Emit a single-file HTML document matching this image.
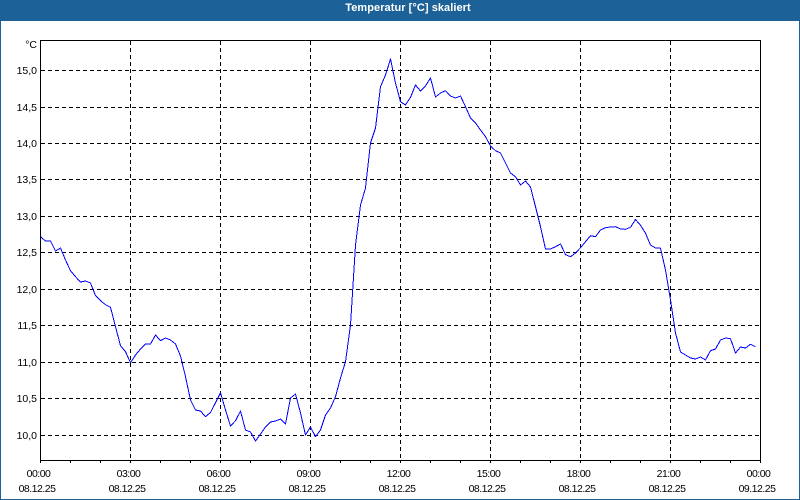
<!DOCTYPE html>
<html lang="de">
<head>
<meta charset="utf-8">
<title>Temperatur</title>
<style>
html,body{margin:0;padding:0;background:#fff}
#c{position:relative;width:800px;height:500px;overflow:hidden;background:#fff;font-family:"Liberation Sans",sans-serif}
svg{position:absolute;left:0;top:0}
text{font-family:"Liberation Sans",sans-serif;font-size:10.5px;fill:#000}
.y{text-anchor:end}
.x{text-anchor:middle}
.t{font-size:11px;font-weight:bold;fill:#fff;text-anchor:middle;letter-spacing:.06px}
</style>
</head>
<body>
<div id="c">
<svg width="800" height="500" viewBox="0 0 800 500">
<rect x="0" y="0" width="800" height="21" fill="#1c6299"/>
<rect x="0" y="0" width="1" height="500" fill="#1c6299"/>
<rect x="799" y="0" width="1" height="500" fill="#1c6299"/>
<rect x="0" y="499" width="800" height="1" fill="#1c6299"/>
<text class="t" x="408" y="11">Temperatur [°C] skaliert</text>

<g stroke="#000" stroke-width="1" fill="none" shape-rendering="crispEdges" stroke-dasharray="4 3">
<path d="M41 70.5H760M41 107.5H760M41 143.5H760M41 179.5H760M41 216.5H760M41 252.5H760M41 289.5H760M41 325.5H760M41 362.5H760M41 398.5H760M41 435.5H760"/>
<path d="M130.5 41V460M220.5 41V460M310.5 41V460M400.5 41V460M490.5 41V460M580.5 41V460M670.5 41V460"/>
</g>

<polyline fill="none" stroke="#0000ff" stroke-width="1" stroke-linejoin="round" shape-rendering="crispEdges" points="40.5,236.7 45.5,241 50.5,241 55.5,251 60.5,248 65.5,260 70.5,270.7 75.5,276.7 80.5,282 85.5,281 90.5,283 95.5,295.7 100.5,300.7 105.5,304.7 110.5,307.3 115.5,326.7 120.5,345.7 125.5,351.7 130.5,362.7 135.5,355 140.5,349 145.5,344 150.5,344 155.5,335 160.5,340.7 165.5,338 170.5,340 175.5,344 180.5,356 185.5,376.7 190.5,400 195.5,410 200.5,411 205.5,416.7 210.5,412.5 215.5,402.7 220.5,392.7 225.5,410 230.5,426 235.5,420.7 240.5,411 245.5,430 250.5,432 255.5,441 260.5,434 265.5,427 270.5,422 275.5,421 280.5,419 285.5,424 290.5,398 295.5,394 300.5,413 305.5,435 310.5,427 315.5,436.7 320.5,430 325.5,415 330.5,408 335.5,396.7 340.5,378 345.5,361.7 350.5,325 355.5,245 360.5,205 365.5,188 370.5,143 375.5,128 380.5,86.7 385.5,75 390.5,59 395.5,83 400.5,101.7 405.5,105 410.5,97.3 415.5,85 420.5,91 425.5,86 430.5,78 435.5,97 440.5,93 445.5,90.7 450.5,96 455.5,98 460.5,96 465.5,106.7 470.5,118 475.5,123 480.5,130 485.5,136.7 490.5,146 495.5,150.7 500.5,153 505.5,163 510.5,173 515.5,176.7 520.5,185 525.5,181 530.5,187 535.5,206.7 540.5,226.7 545.5,249 550.5,249 555.5,246.7 560.5,244 565.5,254.7 570.5,256.7 575.5,253 580.5,247.7 585.5,241.7 590.5,235.7 595.5,236.7 600.5,230 605.5,227.7 610.5,227 615.5,226.7 620.5,229 625.5,229.3 630.5,227.3 635.5,219.5 640.5,225.3 645.5,233.2 650.5,245 655.5,248 660.5,248.2 665.5,270 670.5,300 675.5,333 680.5,352 685.5,355 690.5,358 695.5,359 700.5,357 705.5,360 710.5,350.7 715.5,349 720.5,340 725.5,338 730.5,338.7 735.5,353 740.5,347 745.5,348 750.5,344.3 755.5,346.7"/>

<g stroke="#000" stroke-width="1" fill="none" shape-rendering="crispEdges">
<path stroke-width="1" d="M40.5 460V463M70.5 460V463M100.5 460V463M130.5 460V463M160.5 460V463M190.5 460V463M220.5 460V463M250.5 460V463M280.5 460V463M310.5 460V463M340.5 460V463M370.5 460V463M400.5 460V463M430.5 460V463M460.5 460V463M490.5 460V463M520.5 460V463M550.5 460V463M580.5 460V463M610.5 460V463M640.5 460V463M670.5 460V463M700.5 460V463M730.5 460V463M760.5 460V463"/>
<rect x="40.5" y="40.5" width="720" height="420"/>
</g>

<g>
<text class="y" x="37" y="48">°C</text>
<text class="y" x="37" y="74">15,0</text>
<text class="y" x="37" y="111">14,5</text>
<text class="y" x="37" y="147">14,0</text>
<text class="y" x="37" y="183">13,5</text>
<text class="y" x="37" y="220">13,0</text>
<text class="y" x="37" y="256">12,5</text>
<text class="y" x="37" y="293">12,0</text>
<text class="y" x="37" y="329">11,5</text>
<text class="y" x="37" y="366">11,0</text>
<text class="y" x="37" y="402">10,5</text>
<text class="y" x="37" y="439">10,0</text>
</g>
<g letter-spacing="-0.5">
<text class="x" x="38.5" y="477">00:00</text><text class="x" x="37" y="492">08.12.25</text>
<text class="x" x="128.5" y="477">03:00</text><text class="x" x="127" y="492">08.12.25</text>
<text class="x" x="218.5" y="477">06:00</text><text class="x" x="217" y="492">08.12.25</text>
<text class="x" x="308.5" y="477">09:00</text><text class="x" x="307" y="492">08.12.25</text>
<text class="x" x="398.5" y="477">12:00</text><text class="x" x="397" y="492">08.12.25</text>
<text class="x" x="488.5" y="477">15:00</text><text class="x" x="487" y="492">08.12.25</text>
<text class="x" x="578.5" y="477">18:00</text><text class="x" x="577" y="492">08.12.25</text>
<text class="x" x="668.5" y="477">21:00</text><text class="x" x="667" y="492">08.12.25</text>
<text class="x" x="758.5" y="477">00:00</text><text class="x" x="757" y="492">09.12.25</text>
</g>
</svg>
</div>
</body>
</html>
